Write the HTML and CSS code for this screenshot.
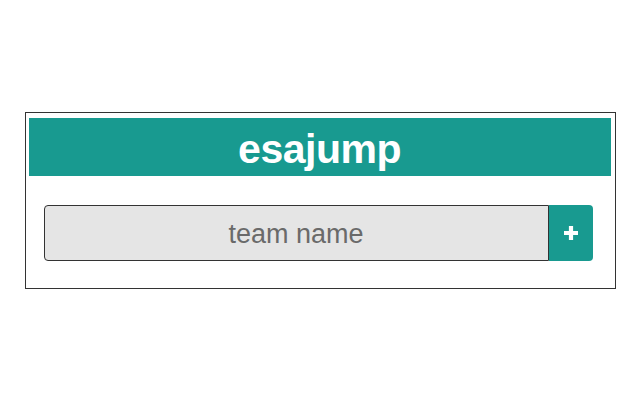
FILE: index.html
```html
<!DOCTYPE html>
<html lang="en">
<head>
<meta charset="utf-8">
<title>esajump</title>
<link rel="stylesheet" href="styles.css">
</head>
<body>
<main class="card">
  <header class="card-header">
    <h1 class="title">esajump</h1>
  </header>
  <form class="team-form">
    <input class="team-input" type="text" placeholder="team name">
    <button class="add-btn" type="button" aria-label="add">
      <svg class="plus" width="16" height="16" viewBox="0 0 16 16"><path d="M8 1V15M1 8H15" stroke="#fff" stroke-width="4.2" fill="none"/></svg>
    </button>
  </form>
</main>
</body>
</html>
```

FILE: styles.css
```css
html, body {
  margin: 0;
  padding: 0;
  background: #ffffff;
}
body {
  height: 100vh;
  display: flex;
  align-items: center;
  justify-content: center;
  font-family: "Liberation Sans", Arial, sans-serif;
}
.card {
  width: 582px;
  border: 1px solid #333333;
  padding: 5px 4px 0 3px;
  box-sizing: content-box;
}
.card-header {
  height: 58px;
  background: #189a90;
  display: flex;
  align-items: center;
  justify-content: center;
}
.title {
  margin: 0;
  color: #ffffff;
  font-size: 41px;
  font-weight: bold;
  letter-spacing: -0.5px;
  line-height: 1;
  padding-top: 6px;
}
.team-form {
  display: flex;
  height: 56px;
  margin: 29px 18px 27px 15px;
}
.team-input {
  flex: 1;
  min-width: 0;
  box-sizing: border-box;
  height: 56px;
  margin: 0;
  border: 1px solid #333333;
  border-radius: 4px 0 0 4px;
  background: #e5e5e5;
  font-family: "Liberation Sans", Arial, sans-serif;
  font-size: 27px;
  text-align: center;
  color: #333333;
  outline: none;
  padding: 3px 8px 0;
}
.team-input::placeholder {
  color: #6a6a6a;
  opacity: 1;
}
.add-btn {
  width: 44px;
  height: 56px;
  margin: 0;
  padding: 0;
  border: none;
  border-radius: 0 4px 4px 0;
  background: #189a90;
  display: flex;
  align-items: center;
  justify-content: center;
}
.plus {
  display: block;
}
```
